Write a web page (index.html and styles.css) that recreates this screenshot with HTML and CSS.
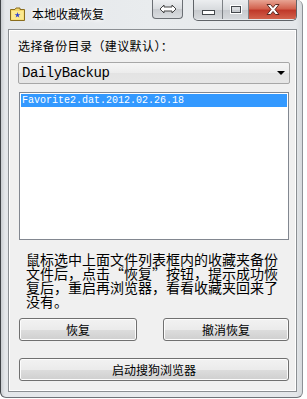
FILE: index.html
```html
<!DOCTYPE html>
<html lang="zh-CN">
<head>
<meta charset="utf-8">
<link rel="stylesheet" href="styles.css">
</head>
<body>
<div class="window">
  <div class="titlebar">
    <svg class="app-icon" width="15" height="14" viewBox="0 0 15 14">
      <path d="M0.5 2.5 L5 2.5 L6 1 L10 1 L10 2.5 L14.5 2.5 L14.5 13.5 L0.5 13.5 Z" fill="#f2d66a" stroke="#8a6d1c"/>
      <rect x="1.5" y="4" width="12" height="8.5" fill="#fbe98f"/>
      <path d="M7.5 5 L8.2 7.2 L10.4 7.2 L8.6 8.5 L9.3 10.6 L7.5 9.3 L5.7 10.6 L6.4 8.5 L4.6 7.2 L6.8 7.2 Z" fill="#2b3fd1"/>
    </svg>
    <span class="title">本地收藏恢复</span>
    <div class="spacer"></div>
    <div class="cap-btn swap">
      <svg width="18" height="10" viewBox="0 0 18 10"><path d="M1 5 L5 1 L5 3 L13 3 L13 1 L17 5 L13 9 L13 7 L5 7 L5 9 Z" fill="#fff" stroke="#444" stroke-width="1"/></svg>
    </div>
    <div class="cap-group">
      <div class="cap-btn min"><span class="min-bar"></span></div>
      <div class="cap-btn max"><span class="max-box"></span></div>
      <div class="cap-btn close">
        <svg width="14" height="11" viewBox="0 0 14 11"><path d="M1 0.5 L4.5 0.5 L7 3.5 L9.5 0.5 L13 0.5 L9 5.5 L13 10.5 L9.5 10.5 L7 7.5 L4.5 10.5 L1 10.5 L5 5.5 Z" fill="#fff" stroke="#5a2a22" stroke-width="1"/></svg>
      </div>
    </div>
  </div>
  <div class="client">
    <div class="label">选择备份目录（建议默认）：</div>
    <div class="combo">
      <span class="combo-text">DailyBackup</span>
      <span class="combo-arrow"></span>
    </div>
    <div class="listbox">
      <div class="item selected">Favorite2.dat.2012.02.26.18</div>
    </div>
    <div class="desc">
      <div class="desc-line">鼠标选中上面文件列表框内的收藏夹备份</div>
      <div class="desc-line">文件后，点击“恢复”按钮，提示成功恢</div>
      <div class="desc-line">复后，重启再浏览器，看看收藏夹回来了</div>
      <div class="desc-line">没有。</div>
    </div>
    <div class="btn-row">
      <div class="btn btn-restore">恢复</div>
      <div class="btn btn-undo">撤消恢复</div>
    </div>
    <div class="btn btn-launch">启动搜狗浏览器</div>
  </div>
</div>
</body>
</html>
```

FILE: styles.css
```css
html, body {
  margin: 0;
  padding: 0;
  background: #ffffff;
}
body {
  width: 307px;
  height: 399px;
  overflow: hidden;
  font-family: "Noto Sans CJK SC", "Liberation Sans", sans-serif;
}
.window {
  width: 301px;
  height: 397px;
  border-left: 1px solid #3f4347;
  border-right: 1px solid #8d9196;
  border-bottom: 1px solid #6f7378;
  border-radius: 0 6px 6px 6px;
  background: linear-gradient(90deg, #c9cdd1 0px, #e4e7ea 4px, #e9ecee 50%, #e4e7ea 98%, #d6dadd 100%);
  display: flex;
  flex-direction: column;
}
.titlebar {
  height: 29px;
  display: flex;
  align-items: flex-start;
  flex-shrink: 0;
}
.app-icon {
  margin: 7px 0 0 9px;
  flex-shrink: 0;
}
.title {
  margin: 5px 0 0 7px;
  font-size: 12px;
  line-height: 17px;
  color: #000;
  text-shadow: 0 0 6px #fff, 0 0 4px #fff;
}
.spacer {
  flex: 1;
}
.cap-btn {
  display: flex;
  align-items: center;
  justify-content: center;
  box-sizing: border-box;
}
.swap {
  width: 31px;
  height: 19px;
  margin-right: 10px;
  border: 1px solid #6b6f74;
  border-top: none;
  border-radius: 0 0 4px 4px;
  background: linear-gradient(#eef0f2, #d9dcdf 50%, #c9ccd0 51%, #dadde0);
}
.cap-group {
  display: flex;
  height: 20px;
  margin-right: 5px;
  border: 1px solid #5f6368;
  border-top: none;
  border-radius: 0 0 5px 5px;
  overflow: hidden;
}
.min, .max {
  height: 19px;
  background: linear-gradient(#eceef0, #d8dbde 50%, #c6c9cd 51%, #d6d9dc);
  border-right: 1px solid #7d8185;
}
.min { width: 29px; }
.max { width: 26px; }
.min-bar {
  width: 11px;
  height: 3px;
  margin-top: 5px;
  border: 1px solid #44484c;
  background: #fff;
}
.max-box {
  width: 8px;
  height: 5px;
  border: 1px solid #44484c;
  outline: 1px solid #fff;
  background: transparent;
}
.close {
  width: 47px;
  height: 19px;
  background: linear-gradient(#e8a493, #d2634f 45%, #c0392a 55%, #d2624c);
}
.client {
  margin-left: 7px;
  width: 287px;
  height: 361px;
  border: 1px solid #8b8f93;
  box-shadow: inset 0 0 0 1px #ffffff;
  background: #f0f0f0;
  display: flex;
  flex-direction: column;
  box-sizing: content-box;
}
.label {
  margin: 8px 0 0 9px;
  font-size: 12px;
  line-height: 16px;
  letter-spacing: 0.4px;
  color: #000;
}
.combo {
  margin: 8px 0 0 9px;
  width: 272px;
  height: 22px;
  box-sizing: border-box;
  border: 1px solid #a7a7a7;
  border-radius: 2px;
  background: linear-gradient(#f5f5f5, #ececec 50%, #e3e3e3 51%, #e6e6e6);
  display: flex;
  align-items: center;
  padding-left: 3px;
}
.combo-text {
  flex: 1;
  font-family: "Liberation Mono", monospace;
  font-size: 14px;
  letter-spacing: -0.45px;
  color: #000;
}
.combo-arrow {
  width: 0;
  height: 0;
  margin-right: 4px;
  border-left: 4px solid transparent;
  border-right: 4px solid transparent;
  border-top: 4px solid #000;
}
.listbox {
  margin: 8px 0 0 10px;
  width: 270px;
  height: 148px;
  box-sizing: border-box;
  border: 1px solid #828790;
  background: #ffffff;
  padding: 1px;
}
.item {
  height: 13px;
  line-height: 13px;
  font-family: "Liberation Mono", monospace;
  font-size: 10px;
  padding-left: 1px;
}
.selected {
  background: #3399ff;
  color: #ffffff;
}
.desc {
  margin: 12px 0 0 17px;
  display: flex;
  flex-direction: column;
}
.desc-line {
  height: 14px;
  font-size: 14px;
  line-height: 14px;
  color: #000;
  white-space: nowrap;
}
.btn {
  box-sizing: border-box;
  height: 23px;
  border: 1px solid #707070;
  border-radius: 3px;
  background: linear-gradient(#f2f2f2, #ebebeb 50%, #dddddd 51%, #cfcfcf);
  box-shadow: inset 0 0 0 1px #fcfcfc;
  font-size: 12px;
  line-height: 21px;
  text-align: center;
  color: #000;
}
.btn-row {
  display: flex;
  gap: 26px;
  margin: 10px 0 0 10px;
}
.btn-restore { width: 118px; }
.btn-undo { width: 126px; }
.btn-launch {
  margin: 17px 0 0 10px;
  width: 270px;
}
```
